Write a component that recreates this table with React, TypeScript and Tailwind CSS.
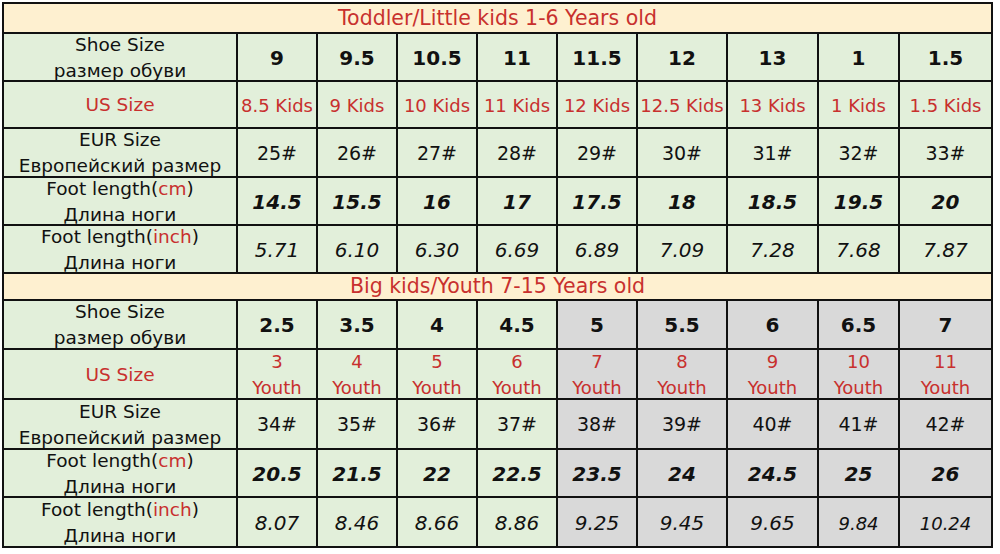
const GREEN = 'bg-[#e2efda]';
const GRAY = 'bg-[#d9d9d9]';

type Row = {
  label: React.ReactNode;
  cells: React.ReactNode[];
  cellClass: string;
  h: string;
};

const red = 'text-[#c8302e]';

const footCm = (
  <>
    Foot length(<span className={red}>cm</span>)
    <br />
    Длина ноги
  </>
);
const footInch = (
  <>
    Foot length(<span className={red}>inch</span>)
    <br />
    Длина ноги
  </>
);
const shoeLabel = (
  <>
    Shoe Size
    <br />
    размер обуви
  </>
);
const eurLabel = (
  <>
    EUR Size
    <br />
    Европейский размер
  </>
);
const usLabel = <span className={red}>US Size</span>;

const youth = (n: string) => (
  <>
    {n}
    <br />
    Youth
  </>
);

const topRows: Row[] = [
  {
    label: shoeLabel,
    cells: ['9', '9.5', '10.5', '11', '11.5', '12', '13', '1', '1.5'],
    cellClass: 'font-bold text-[20px]',
    h: 'h-[46px]',
  },
  {
    label: usLabel,
    cells: ['8.5 Kids', '9 Kids', '10 Kids', '11 Kids', '12 Kids', '12.5 Kids', '13 Kids', '1 Kids', '1.5 Kids'],
    cellClass: `text-[18px] whitespace-nowrap ${red}`,
    h: 'h-[45px]',
  },
  {
    label: eurLabel,
    cells: ['25#', '26#', '27#', '28#', '29#', '30#', '31#', '32#', '33#'],
    cellClass: 'text-[19px]',
    h: 'h-[47px]',
  },
  {
    label: footCm,
    cells: ['14.5', '15.5', '16', '17', '17.5', '18', '18.5', '19.5', '20'],
    cellClass: 'font-bold italic text-[20px]',
    h: 'h-[46px]',
  },
  {
    label: footInch,
    cells: ['5.71', '6.10', '6.30', '6.69', '6.89', '7.09', '7.28', '7.68', '7.87'],
    cellClass: 'italic text-[20px]',
    h: 'h-[46px]',
  },
];

const bottomRows: Row[] = [
  {
    label: shoeLabel,
    cells: ['2.5', '3.5', '4', '4.5', '5', '5.5', '6', '6.5', '7'],
    cellClass: 'font-bold text-[20px]',
    h: 'h-[47px]',
  },
  {
    label: usLabel,
    cells: ['3', '4', '5', '6', '7', '8', '9', '10', '11'].map(youth),
    cellClass: `text-[18px] leading-[26px] ${red}`,
    h: 'h-[48px]',
  },
  {
    label: eurLabel,
    cells: ['34#', '35#', '36#', '37#', '38#', '39#', '40#', '41#', '42#'],
    cellClass: 'text-[19px]',
    h: 'h-[48px]',
  },
  {
    label: footCm,
    cells: ['20.5', '21.5', '22', '22.5', '23.5', '24', '24.5', '25', '26'],
    cellClass: 'font-bold italic text-[20px]',
    h: 'h-[46px]',
  },
  {
    label: footInch,
    cells: [
      '8.07',
      '8.46',
      '8.66',
      '8.86',
      '9.25',
      '9.45',
      '9.65',
      <span className="text-[18px]">9.84</span>,
      <span className="text-[18px]">10.24</span>,
    ],
    cellClass: 'italic text-[20px]',
    h: 'h-[48px]',
  },
];

function Header({ title, h }: { title: string; h: string }) {
  return (
    <div className={`col-span-10 ${h} bg-[#fef0d0] flex items-center justify-center text-[20.5px] ${red}`}>
      {title}
    </div>
  );
}

function Rows({ rows, grayFrom }: { rows: Row[]; grayFrom?: number }) {
  return (
    <>
      {rows.map((row, r) => (
        <div key={r} className="contents">
          <div className={`${row.h} ${GREEN} flex items-center justify-center text-center text-[18.5px] leading-[26px] pt-[1px]`}>
            <div>{row.label}</div>
          </div>
          {row.cells.map((c, i) => (
            <div
              key={i}
              className={`${row.h} ${grayFrom !== undefined && i >= grayFrom ? GRAY : GREEN} flex items-center justify-center text-center pt-[1px] ${row.cellClass}`}
            >
              <div>{c}</div>
            </div>
          ))}
        </div>
      ))}
    </>
  );
}

export default function App() {
  return (
    <div className="w-[1000px] h-[554px] bg-white pt-[2px] pl-[2px]" style={{ fontFamily: '"DejaVu Sans", Verdana, sans-serif' }}>
      <div className="inline-grid grid-cols-[232px_78px_78px_78px_78px_78px_88px_89px_79px_91px] gap-[2px] p-[2px] bg-[#111] text-[#111]">
        <Header title="Toddler/Little kids 1-6 Years old" h="h-[28px]" />
        <Rows rows={topRows} />
        <Header title="Big kids/Youth 7-15 Years old" h="h-[25px]" />
        <Rows rows={bottomRows} grayFrom={4} />
      </div>
    </div>
  );
}
